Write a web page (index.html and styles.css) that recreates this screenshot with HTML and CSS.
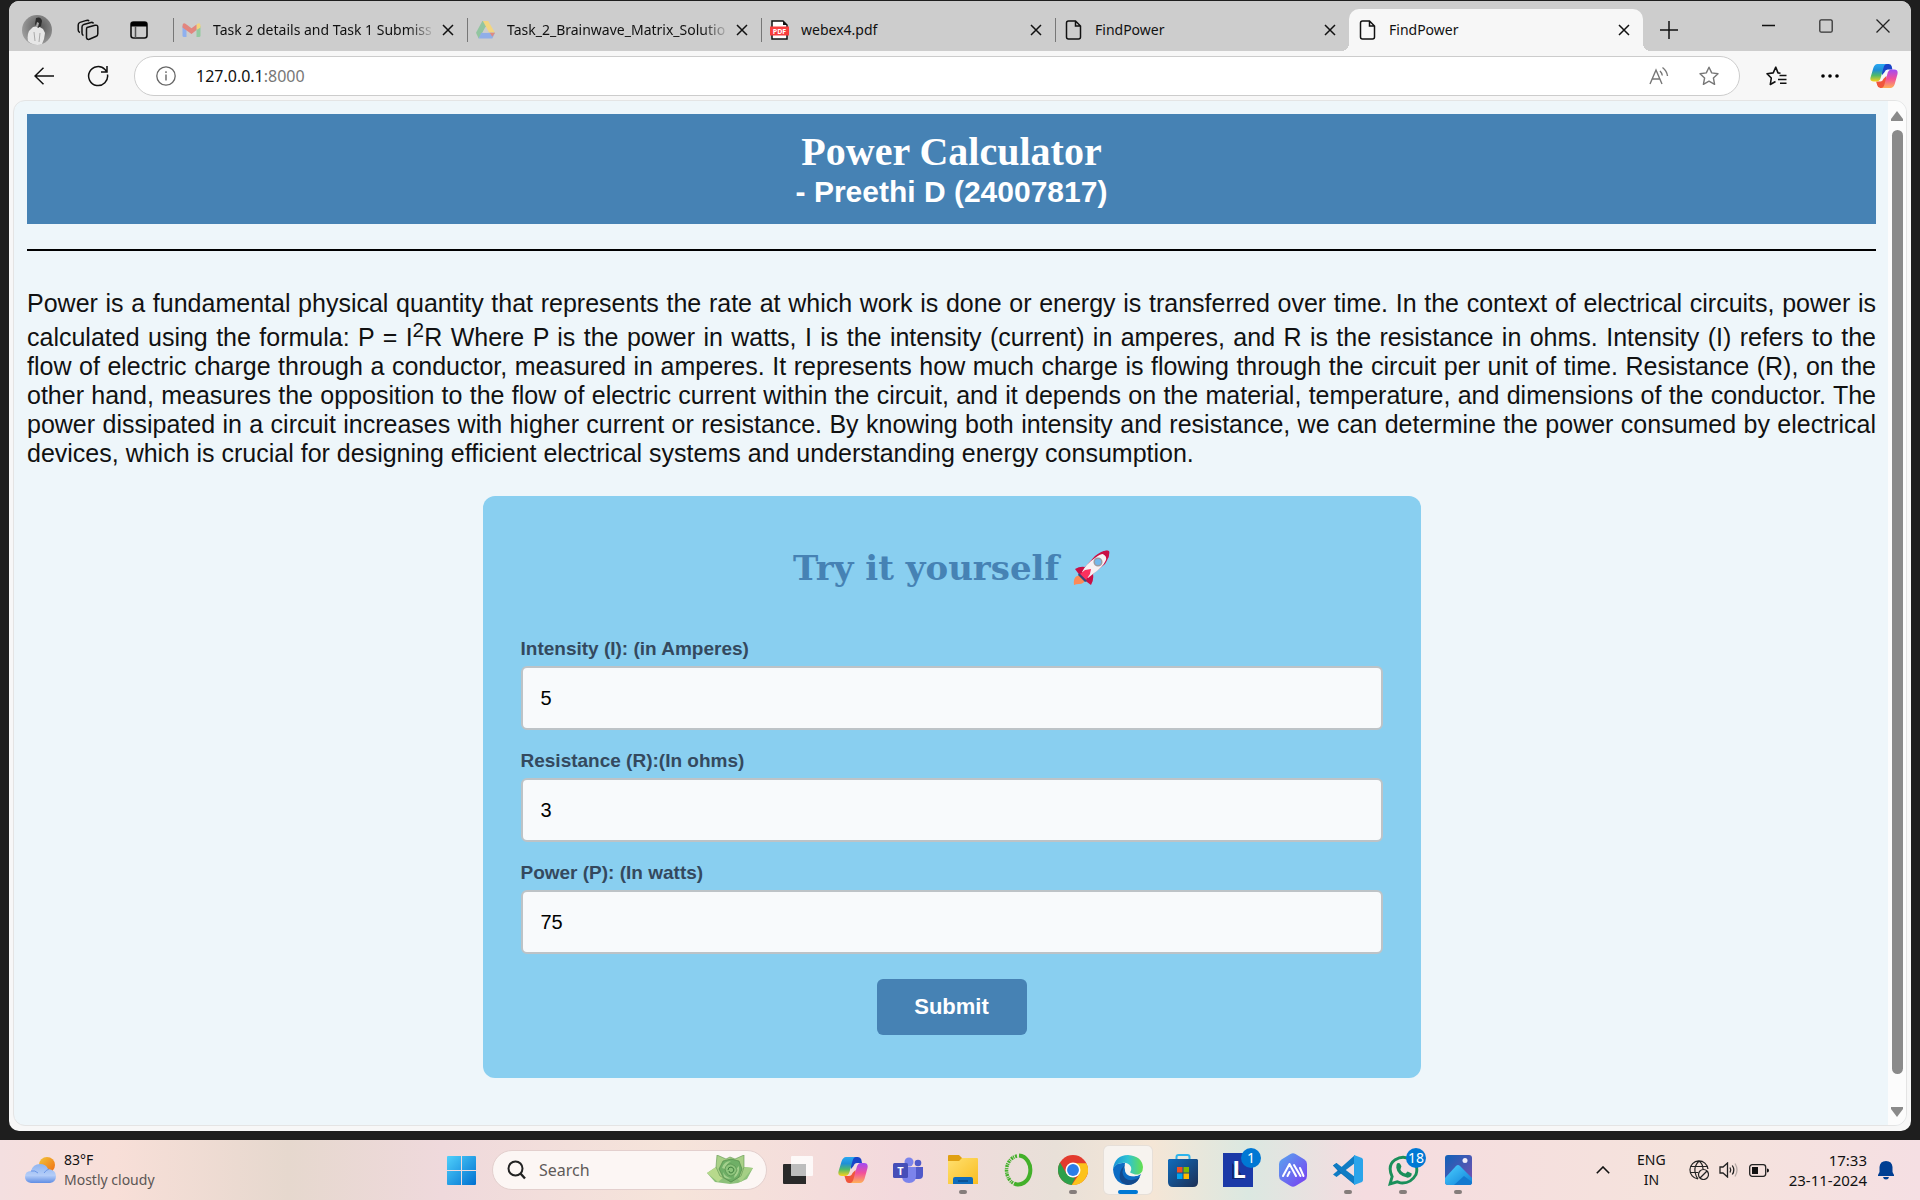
FILE: index.html
```html
<!DOCTYPE html>
<html lang="en">
<head>
<meta charset="utf-8">
<meta name="viewport" content="width=device-width, initial-scale=1">
<title>FindPower</title>
<link rel="stylesheet" href="styles.css">
</head>
<body>
<svg class="defs" aria-hidden="true">
  <defs>
    <linearGradient id="cpA" x1="0" y1="0" x2="0" y2="1"><stop offset="0" stop-color="#2aa8f2"/><stop offset=".35" stop-color="#1f8fd6"/><stop offset=".65" stop-color="#4fb96a"/><stop offset="1" stop-color="#fdd21a"/></linearGradient>
    <linearGradient id="cpB" x1="0" y1="0" x2="0" y2="1"><stop offset="0" stop-color="#a04bf5"/><stop offset=".5" stop-color="#f2509b"/><stop offset="1" stop-color="#ffb057"/></linearGradient>
    <linearGradient id="winG" x1="0" y1="0" x2="1" y2="1"><stop offset="0" stop-color="#4fd0fb"/><stop offset="1" stop-color="#0070d0"/></linearGradient>
    <linearGradient id="sunG" x1="0" y1="0" x2="1" y2="1"><stop offset="0" stop-color="#f2c63a"/><stop offset="1" stop-color="#f06a10"/></linearGradient>
    <linearGradient id="cloudG" x1="0" y1="0" x2="0" y2="1"><stop offset="0" stop-color="#8fb4f0"/><stop offset=".6" stop-color="#b4cdf8"/><stop offset="1" stop-color="#5f8de4"/></linearGradient>
    <linearGradient id="foldG" x1="0" y1="0" x2="1" y2="1"><stop offset="0" stop-color="#ffe070"/><stop offset="1" stop-color="#f9bd20"/></linearGradient>
    <linearGradient id="edgeT" x1="0" y1="0" x2="1" y2="0"><stop offset="0" stop-color="#1793d8"/><stop offset=".5" stop-color="#2fc3d2"/><stop offset="1" stop-color="#66e04c"/></linearGradient>
    <linearGradient id="storeG" x1="0" y1="0" x2="1" y2="1"><stop offset="0" stop-color="#0f6cbd"/><stop offset="1" stop-color="#1c2f55"/></linearGradient>
    <linearGradient id="hexG" x1="0" y1="0" x2="1" y2="1"><stop offset="0" stop-color="#58a6ee"/><stop offset="1" stop-color="#7a3df2"/></linearGradient>
    <linearGradient id="phG" x1="0" y1="0" x2="1" y2="1"><stop offset="0" stop-color="#0f62b8"/><stop offset="1" stop-color="#7c4fb0"/></linearGradient>
    <linearGradient id="phM" x1="0" y1="0" x2="1" y2="1"><stop offset="0" stop-color="#4cd0ff"/><stop offset="1" stop-color="#0f80d8"/></linearGradient>
    <radialGradient id="avG" cx=".6" cy=".4" r=".6"><stop offset="0" stop-color="#555"/><stop offset="1" stop-color="#9a9a9a"/></radialGradient>
    <symbol id="copilot" viewBox="0 0 30 28">
      <path fill="#1a45c8" d="M11 1h9q2.500 0 3.300 2.500L24 7h-5q-2.500 0-3.500 3L13 13z"/>
      <path fill="#f0563c" d="M19 27h-8q-2.500 0-3.300-3L6.500 20H11q2.500 0 3.500-3l3-3z"/>
      <path fill="url(#cpA)" d="M8 1h10q-2.500 0-3.500 4l-3 11q-1.200 4-4.500 4H4q-4.500 0-3.500-4.500l3-10Q5 1 8 1z"/>
      <path fill="url(#cpB)" d="M22 27H12q2.500 0 3.500-4l3-11q1.200-5 4.500-5h3q4.500 0 3.500 5l-3 11Q25 27 22 27z"/>
    </symbol>
    <symbol id="page" viewBox="0 0 16 20"><path d="M3 1h7l5 5v11a2 2 0 0 1-2 2H3a2 2 0 0 1-2-2V3a2 2 0 0 1 2-2zM10 1v5h5" fill="none" stroke="#111" stroke-width="1.500"/></symbol>
    <symbol id="x" viewBox="0 0 12 12"><path d="M1 1l10 10M11 1L1 11" stroke="#111" stroke-width="1.500" fill="none"/></symbol>
  </defs>
</svg>

<div class="desktop">
  <div class="window">
    <header class="tabstrip">
      <div class="tab-tools">
        <button class="tool" aria-label="Profile"><svg width="30" height="30" viewBox="0 0 30 30"><circle cx="15" cy="15" r="15" fill="url(#avG)"/><path d="M6 26q-1-6 1-10l4-4 5-1 5 3 2 4-1 6-2 5q-4 1.500-8 .5-4-1-6-3.500z" fill="#e6e6e6"/><path d="M14 3q5-2 6 3l-1 5-3 2-3-4z" fill="#2c2c2c"/><path d="M15 7l2 1-1 4-2-1z" fill="#aaa"/><path d="M12 17l1 9M18 18l-1 9" stroke="#aaa"/></svg></button>
        <button class="tool" aria-label="Workspaces"><svg width="22" height="22" viewBox="0 0 22 22" fill="none" stroke="#111" stroke-width="1.500" stroke-linejoin="round"><path d="M10 8.500l8-2.200q2.500-.5 2.800 1.500v7q0 2-1.500 2.500l-7 3q-2.300.5-2.800-1.500v-8q0-1.800.5-2.300z"/><path d="M6.500 16.500q-1.500-.5-1.500-2.500V8q0-2 1.800-2.500L14 3.500q2-.5 2.500 1"/><path d="M3 13.500Q1.200 13 1.200 11V6q0-2 1.800-2.600L9.500 1.400q2-.5 2.500.8"/></svg></button>
        <button class="tool" aria-label="Tab actions"><svg width="18" height="18" viewBox="0 0 18 18"><rect x="1" y="1" width="16" height="16" rx="2.500" fill="none" stroke="#111" stroke-width="1.600"/><path d="M1 5.500V3q0-2 2-2h12q2 0 2 2v2.500z" fill="#000"/><path d="M5.500 5v12" stroke="#555" stroke-width="1.500"/></svg></button>
      </div>
      <nav class="tabs" aria-label="Tabs">
        <div class="tab">
          <svg class="fav" width="18" height="14" viewBox="0 0 18 14"><path fill="#8fb0ee" d="M0 3l4 3v8H1.500Q0 14 0 12.500z"/><path fill="#93c9a0" d="M18 3l-4 3v8h2.500q1.500 0 1.500-1.500z"/><path fill="#f3d47c" d="M14 1.500q4-3 4 1.500v1.500L14 7z"/><path fill="#e2857e" d="M0 3q0-4.500 4-1.500l5 3.800 5-3.800V7L9 11 0 4.500z"/></svg>
          <span class="title long">Task 2 details and Task 1 Submiss</span>
          <button class="close" aria-label="Close tab"><svg width="12" height="12"><use href="#x"/></svg></button>
        </div>
        <div class="tab">
          <svg class="fav" width="18" height="18" viewBox="0 0 18 17"><path fill="#92c5a0" d="M6 0h3l1.500 4L4 14.500 2.500 16.500 0 11z"/><path fill="#f3d680" d="M6.500 0h5L18 11h-5.500z"/><path fill="#90aee8" d="M5 11h13l-2.500 5.500h-13z"/><path fill="#cdcdcd" d="M9 5.500l3 5.500H6z"/><path fill="#e08a80" d="M13 11h5l-2.500 4z"/></svg>
          <span class="title long">Task_2_Brainwave_Matrix_Solutio</span>
          <button class="close" aria-label="Close tab"><svg width="12" height="12"><use href="#x"/></svg></button>
        </div>
        <div class="tab">
          <svg class="fav" width="19" height="20" viewBox="0 0 19 20"><path d="M2 1h11l4 4v14H2z" fill="#fff" stroke="#111" stroke-width="1.500"/><path d="M13 1v4h4z" fill="#111"/><rect y="6.500" width="19" height="9" fill="#f83d3d"/><text x="9.500" y="14" font-size="7" font-weight="700" font-family="Open Sans, sans-serif" text-anchor="middle" fill="#fff">PDF</text></svg>
          <span class="title">webex4.pdf</span>
          <button class="close" aria-label="Close tab"><svg width="12" height="12"><use href="#x"/></svg></button>
        </div>
        <div class="tab">
          <svg class="fav" width="16" height="20"><use href="#page"/></svg>
          <span class="title">FindPower</span>
          <button class="close" aria-label="Close tab"><svg width="12" height="12"><use href="#x"/></svg></button>
        </div>
        <div class="tab active">
          <svg class="fav" width="16" height="20"><use href="#page"/></svg>
          <span class="title">FindPower</span>
          <button class="close" aria-label="Close tab"><svg width="12" height="12"><use href="#x"/></svg></button>
        </div>
        <button class="new-tab" aria-label="New tab"><svg width="18" height="18" viewBox="0 0 18 18"><path d="M9 0v18M0 9h18" stroke="#111" stroke-width="1.500"/></svg></button>
      </nav>
      <div class="win-controls">
        <button aria-label="Minimize"><svg width="14" height="14" viewBox="0 0 14 14"><path d="M0 6.500h13" stroke="#111" stroke-width="1.300"/></svg></button>
        <button aria-label="Maximize"><svg width="14" height="14" viewBox="0 0 14 14"><rect x=".8" y=".8" width="12.400" height="12.400" rx="1.500" fill="none" stroke="#333" stroke-width="1.300"/></svg></button>
        <button aria-label="Close window"><svg width="14" height="14" viewBox="0 0 14 14"><path d="M.5.5l13 13M13.500.5l-13 13" stroke="#222" stroke-width="1.300"/></svg></button>
      </div>
    </header>

    <div class="toolbar">
      <button class="nav-btn" aria-label="Back"><svg width="20" height="18" viewBox="0 0 20 18" fill="none" stroke="#111" stroke-width="1.500"><path d="M20 9H1M9.500.8L1 9l8.500 8.200"/></svg></button>
      <button class="nav-btn" aria-label="Refresh"><svg width="22" height="22" viewBox="0 0 22 22" fill="none" stroke="#111" stroke-width="1.500"><path d="M20.500 9.500A9.500 9.500 0 1 1 18 4.500L20 7M20 1v6h-6"/></svg></button>
      <div class="address">
        <svg width="20" height="20" viewBox="0 0 20 20"><circle cx="10" cy="10" r="9.200" fill="none" stroke="#666" stroke-width="1.300"/><path d="M10 8.500v6M10 5.300v1.600" stroke="#666" stroke-width="1.400"/></svg>
        <a class="url" href="http://127.0.0.1:8000">127.0.0.1<span class="port">:8000</span></a>
        <button class="addr-btn" aria-label="Read aloud"><svg width="20" height="20" viewBox="0 0 20 20" fill="none" stroke="#777" stroke-width="1.400"><path d="M1 18L7 4l6 14M3.500 13h7M11 5q2 2 2.300 4.500M13.500 1.500q4.500 3.500 5 8.500"/></svg></button>
        <button class="addr-btn" aria-label="Add to favorites"><svg width="20" height="20" viewBox="0 0 20 20"><path d="M10 1.200l2.700 5.700 6.300.8-4.600 4.300 1.200 6.300L10 15.200l-5.600 3.100L5.600 12 1 7.700l6.300-.8z" fill="none" stroke="#777" stroke-width="1.400" stroke-linejoin="round"/></svg></button>
      </div>
      <button class="nav-btn" aria-label="Favorites"><svg width="21" height="20" viewBox="0 0 21 20" fill="none" stroke="#111" stroke-width="1.600" stroke-linejoin="round"><path d="M14.500 7.300l-2.500-.4L9.800 1.200 7.200 6.900 1 7.700 5.300 12l-1 6.500 5.200-3M13.500 9.500h7M12 13.500h8.500M14 17.300h6.500"/></svg></button>
      <button class="nav-btn" aria-label="Settings and more"><svg width="18" height="4" viewBox="0 0 18 4"><circle cx="2" cy="2" r="1.800"/><circle cx="9" cy="2" r="1.800"/><circle cx="16" cy="2" r="1.800"/></svg></button>
      <button class="nav-btn" aria-label="Copilot"><svg width="28" height="26"><use href="#copilot"/></svg></button>
    </div>

    <div class="viewport">
      <main class="page">
        <div class="banner">
          <h1>Power Calculator</h1>
          <h2>- Preethi D (24007817)</h2>
        </div>
        <hr>
        <p class="intro">Power is a fundamental physical quantity that represents the rate at which work is done or energy is transferred over time. In the context of electrical circuits, power is calculated using the formula: P = I<sup>2</sup>R Where P is the power in watts, I is the intensity (current) in amperes, and R is the resistance in ohms. Intensity (I) refers to the flow of electric charge through a conductor, measured in amperes. It represents how much charge is flowing through the circuit per unit of time. Resistance (R), on the other hand, measures the opposition to the flow of electric current within the circuit, and it depends on the material, temperature, and dimensions of the conductor. The power dissipated in a circuit increases with higher current or resistance. By knowing both intensity and resistance, we can determine the power consumed by electrical devices, which is crucial for designing efficient electrical systems and understanding energy consumption.</p>
        <form class="card" onsubmit="return false">
          <h3>Try it yourself <svg role="img" aria-label="rocket" width="37" height="36" viewBox="0 0 37 36"><path fill="#fd8a58" d="M1 35q-1-7 3-9l6-1 2 5q-1 4-6 4-3 0-5 1z"/><path fill="#c90f45" d="M2 19q5-3 10-2l10-11Q30-.5 36 1q1 5-4 13L20 24q1 6-2 11l-8-6-5-6z"/><path fill="#f6f2f4" d="M9 22q4-8 13-14 5-4 8-4 4 2 3 6-3 7-13 14l-5 4z"/><path fill="#c90f45" d="M30 1.500q4-1.500 6-.5.800 2-.8 7L29 3z"/><path fill="#fb305e" d="M7 24l5-4 6-1-1 5-4 6z"/><path fill="#34477c" d="M6 23l8 8-2 1-7-7z"/><circle cx="25" cy="12" r="3.800" fill="#72b9ec" stroke="#9b9ca3" stroke-width="1.500"/></svg></h3>
          <div class="field"><label for="intensity">Intensity (I): (in Amperes)</label><input id="intensity" type="text" value="5"></div>
          <div class="field"><label for="resistance">Resistance (R):(In ohms)</label><input id="resistance" type="text" value="3"></div>
          <div class="field"><label for="power">Power (P): (In watts)</label><input id="power" type="text" value="75"></div>
          <button class="submit" type="submit">Submit</button>
        </form>
      </main>
      <div class="scrollbar" aria-hidden="true">
        <svg width="12" height="10" viewBox="0 0 12 10"><path d="M6 0l6 8v2H0V8z" fill="#8a8a8a"/></svg>
        <div class="thumb"></div>
        <svg width="12" height="10" viewBox="0 0 12 10"><path d="M6 10l6-8V0H0v2z" fill="#8a8a8a"/></svg>
      </div>
    </div>
  </div>

  <footer class="taskbar">
    <div class="weather">
      <svg width="31" height="26" viewBox="0 0 31 26"><circle cx="22" cy="8" r="8" fill="url(#sunG)"/><path d="M6 26q-6-1-6-6 0-6 6-6Q8 7 15 7q6 0 8 5 8 1 8 7 0 6-6 7z" fill="url(#cloudG)"/><path d="M6 14q4-1 7 2M19 16q2-3 5-4" stroke="#6c96e6" fill="none"/></svg>
      <div class="lines"><span>83°F</span><span class="muted">Mostly cloudy</span></div>
    </div>
    <div class="dock">
      <button class="app" aria-label="Start"><svg width="29" height="29" viewBox="0 0 29 29"><path fill="url(#winG)" d="M1 0h13v14H0V1q0-1 1-1zM15 0h13q1 0 1 1v13H15zM0 15h14v14H1q-1 0-1-1zM15 15h14v13q0 1-1 1H15z"/></svg></button>
      <div class="search">
        <svg width="19" height="20" viewBox="0 0 19 20"><circle cx="8.500" cy="8.500" r="7" fill="none" stroke="#222" stroke-width="2"/><path d="M13.500 13.500l4.500 5" stroke="#222" stroke-width="2.400"/></svg>
        <input type="text" placeholder="Search" aria-label="Search">
        <svg width="46" height="30" viewBox="0 0 46 30"><path fill="#8cc07a" d="M23 29L8 27 0 18l9-6 14 8 14-8 9 1-6 11-9 4z"/><path fill="#b7d98c" d="M0 18l9-6 8 10-6 5z"/><path fill="#a5cf85" d="M46 13l-9-1-8 10 5 5z"/><path fill="#a9d087" stroke="#5f9650" stroke-width=".6" d="M10 0l9 4 4-2 5 2 9-4v12l-3 9-10 6-11-6-4-9z"/><path fill="#6faf66" stroke="#4c8544" stroke-width=".6" d="M12 14l4-8 8-2 8 2 3 8-3 8-8 5-8-5z"/><path fill="#a3d08c" d="M15 13q2-7 9-7-5 3-6 8zM32 11q1 8-5 12 1-6 2-9zM16 17q3 6 9 6-5 2-8-1z"/><path fill="#8cc47b" stroke="#4c8544" stroke-width=".6" d="M18 14q1-5 6-5 5 1 6 6-1 5-6 6-5-1-6-7z"/><path d="M21 15q0-3 3-3 3 1 3 3-1 3-3 3-2 0-2-2" fill="none" stroke="#3f7f3e"/></svg>
      </div>
      <button class="app" aria-label="Task view"><svg width="30" height="28" viewBox="0 0 30 28"><path fill="#2a2a2a" d="M1 8h22v20H1q-1 0-1-1V9q0-1 1-1z"/><rect x="8" width="22" height="20" rx="1" fill="#fff" opacity=".8"/><path fill="#b4b4b4" d="M8 8h15v12H8z" opacity=".7"/></svg></button>
      <button class="app" aria-label="Copilot"><svg width="30" height="28"><use href="#copilot"/></svg></button>
      <button class="app" aria-label="Teams"><svg width="31" height="27" viewBox="0 0 31 27"><circle cx="16" cy="5" r="4.500" fill="#7b83eb"/><circle cx="25" cy="6" r="3.300" fill="#5059c9"/><path fill="#5059c9" d="M21 10h9v8q0 4-4 4h-5z"/><path fill="#7b83eb" d="M9 10h14v9q0 7-7 7t-7-7z"/><rect y="6" width="15" height="15" rx="1.500" fill="#464eb8"/><text x="7.500" y="17.500" text-anchor="middle" font-family="Open Sans, sans-serif" font-weight="700" font-size="11" fill="#fff">T</text></svg></button>
      <button class="app running" aria-label="File Explorer"><svg width="30" height="30" viewBox="0 0 30 30"><path fill="#e0a012" d="M1 0h10l3 3v5H0V1q0-1 1-1z"/><path fill="url(#foldG)" d="M0 6h11l3-3h15q1 0 1 1v25H0z"/><path fill="#0f6cbd" d="M5 29v-5q0-2 2-2h16q2 0 2 2v5z"/><path d="M10 26h10" stroke="#0b4a8a" stroke-width="1.500"/></svg></button>
      <button class="app" aria-label="Anaconda"><svg width="30" height="34" viewBox="0 0 30 34" fill="none" stroke="#43b02a"><path d="M16 2.500a12 14.500 0 1 1-5 28" stroke-width="4"/><path d="M14 3A12.500 14.500 0 0 0 10 30" stroke-width="3.500" stroke-dasharray="2 1 1 .6"/></svg></button>
      <button class="app running" aria-label="Chrome"><svg width="30" height="30" viewBox="0 0 48 48"><circle cx="24" cy="24" r="24" fill="#e33b2e"/><path fill="#2da04a" d="M3.200 12L13.600 30 24 36l4 0L22 48A24 24 0 0 1 3.200 12z"/><path fill="#fcc21b" d="M24 13h21.300A24 24 0 0 1 22 48l12.400-18z"/><circle cx="24" cy="24" r="12" fill="#fff"/><circle cx="24" cy="24" r="9.500" fill="#2b7de9"/></svg></button>
      <button class="app running focused" aria-label="Edge"><svg width="30" height="30" viewBox="0 0 30 30"><path fill="#0c6cc4" d="M0 14Q2 7 12 8q-2 8 4 12 6 3 12-1-4 11-13 11Q1 29 0 14z"/><path fill="#134a8e" d="M12 10q-5 7 0 13 6 5 15-1-4 8-12 8Q5 28 7 18q1-5 5-8z"/><path fill="url(#edgeT)" d="M0 14Q2 0 15 0q14 1 15 12 0 8-8 8-5 0-6-2 3-2 2-6-3-5-9-4-6 0-9 6z"/><path fill="#f7f3ef" d="M15 12q-3 1-3 4 1 4 5 5 5 1 9-1-4 0-8-2-3-2-1-5z"/></svg></button>
      <button class="app" aria-label="Microsoft Store"><svg width="30" height="33" viewBox="0 0 30 33"><path d="M8.500 6V3q0-2 2-2h9q2 0 2 2v3" fill="none" stroke="#2db4ec" stroke-width="2"/><path fill="url(#storeG)" d="M1 5h28l1 1v22q0 5-5 5H5q-5 0-5-5V6z"/><path fill="#f25022" d="M9 13h5.500v5.500H9z"/><path fill="#7fba00" d="M15.500 13H21v5.500h-5.500z"/><path fill="#00a4ef" d="M9 19.500h5.500V25H9z"/><path fill="#ffb900" d="M15.500 19.500H21V25h-5.500z"/></svg></button>
      <button class="app" aria-label="L"><svg width="30" height="34" viewBox="0 0 30 34"><path fill="#1b3aa8" d="M0 0h30v34H0z"/><path d="M9 10v16h12l-6-10z" fill="#12246e"/><text x="16" y="25" text-anchor="middle" font-family="Open Sans, sans-serif" font-weight="700" font-size="24" fill="#fff">L</text></svg><span class="badge">1</span></button>
      <button class="app" aria-label="Assistant"><svg width="28" height="34" viewBox="0 0 28 34"><path fill="url(#hexG)" d="M11.500 1q2.500-1.500 5 0l9 5.500Q28 8 28 11v12q0 3-2.500 4.500l-9 5.500q-2.500 1.500-5 0l-9-5.500Q0 26 0 23V11q0-3 2.500-4.500z"/><path d="M4 23l6.500-12L17 23M8.500 23l2-4M15 12l6.500 11M21 15l3.500 8" stroke="#fff" stroke-width="2" fill="none" stroke-linecap="round" stroke-linejoin="round"/></svg></button>
      <button class="app running" aria-label="Visual Studio Code"><svg width="30" height="32" viewBox="0 0 30 30"><path fill="#0f7cc4" d="M22 0l-19 17-3 2.500L3.500 22 22 8z"/><path fill="#0a68ad" d="M22 30L3.500 8 0 10.500 5 16l17 14z"/><path fill="#0f7cc4" d="M3.500 8L22 22v8L0 10.500z"/><path fill="#2ba4ea" d="M21 0l8 3q1 1 1 2v20q0 1-1 2l-8 3z"/></svg></button>
      <button class="app running" aria-label="WhatsApp"><svg width="31" height="33" viewBox="0 0 30 30"><path d="M2 28l2-7Q-1 10 7 4.500 15-.5 23 5q7 6 4 14-5 9-15 8l-3-1z" fill="none" stroke="#1a8f5a" stroke-width="2.800"/><path d="M9 8q2-1 3 1l1 2-1 3q1 3 5 4l2-2 4 2q0 4-4 4Q9 20 8 12q0-3 1-4z" fill="#1a8f5a"/></svg><span class="badge">18</span></button>
      <button class="app running" aria-label="Photos"><svg width="27" height="30" viewBox="0 0 27 30"><rect width="27" height="30" rx="3" fill="url(#phG)"/><path fill="url(#phM)" d="M0 23L11 11q2-2 4 0l12 12v4q0 3-3 3H3q-3 0-3-3z"/><path fill="#1479cf" d="M9 30l10-9 8 6q0 3-3 3z"/><circle cx="20" cy="5.500" r="2.500" fill="#f1edf8"/></svg></button>
    </div>
    <div class="tray">
      <button aria-label="Show hidden icons"><svg width="14" height="8" viewBox="0 0 14 8"><path d="M.8 7.200L7 1l6.200 6.200" fill="none" stroke="#111" stroke-width="1.600"/></svg></button>
      <div class="lines lang"><span>ENG</span><span>IN</span></div>
      <div class="status">
        <svg width="20" height="20" viewBox="0 0 20 20" fill="none" stroke="#222" stroke-width="1.200"><path d="M9 18.900A9 9 0 1 1 18.900 9M1.500 6.500h17M1 12.500h8M10 1Q5 6 6 12q1 5 3 7M10 1q4 3 4 8"/><circle cx="14.500" cy="14.500" r="5"/><path d="M11 18l7-7"/></svg>
        <svg width="20" height="16" viewBox="0 0 20 16" fill="none" stroke="#222" stroke-width="1.300"><path d="M1 5h3l4.500-4v14L4 11H1z"/><path d="M11 5.500q1.500 2.500 0 5M13.300 3.500q3 4.500 0 9"/><path d="M16 1.500q4 6.500 0 13" stroke="#b5aaa6"/></svg>
        <svg width="20" height="13" viewBox="0 0 20 13"><rect x=".7" y=".7" width="16" height="11.600" rx="2.500" fill="none" stroke="#222" stroke-width="1.300"/><path d="M3 3h6v7H3zM18 4.500q2 0 2 2t-2 2z" fill="#111"/></svg>
      </div>
      <div class="lines clock"><time>17:33</time><time>23-11-2024</time></div>
      <button aria-label="Notifications"><svg width="16" height="19" viewBox="0 0 16 19"><path fill="#003e92" d="M8 0q6 0 6.500 6v5l1.500 3v1H0v-1l1.500-3V6Q2 0 8 0zM5 16h6q-.5 2.500-3 2.500T5 16z"/></svg></button>
    </div>
  </footer>
</div>
</body>
</html>
```
FILE: styles.css
```css
* { box-sizing: border-box; }

body {
  margin: 0;
  background: #1e1e1e;
  font-family: "Noto Sans", sans-serif;
  font-size: 14px;
  color: #111;
}

button {
  border: 0;
  padding: 0;
  background: none;
  font: inherit;
  color: inherit;
  display: flex;
  align-items: center;
  justify-content: center;
}

svg { display: block; flex: none; }

.defs { position: absolute; width: 0; height: 0; }

.desktop {
  min-height: 100vh;
  display: flex;
  flex-direction: column;
}

/* Browser window */
.window {
  flex: 1;
  margin: 1px 9px 9px;
  border-radius: 10px;
  background: #f7f7f7;
  overflow: hidden;
  display: flex;
  flex-direction: column;
}

.tabstrip {
  height: 50px;
  background: #cdcdcd;
  display: flex;
}

.tab-tools {
  display: flex;
  align-items: center;
  padding: 8px 9px 0 2px;
}

.tool { width: 51px; height: 42px; }

.tabs {
  flex: 1;
  min-width: 0;
  display: flex;
  align-items: center;
  padding-top: 8px;
}

.tab {
  flex: 0 1 294px;
  min-width: 0;
  height: 42px;
  display: flex;
  align-items: center;
  gap: 12px;
  padding: 0 13px 0 9px;
  background: linear-gradient(#777, #777) left 9px / 1px 24px no-repeat;
}

.fav { width: 19px; }

.title {
  flex: 1;
  min-width: 0;
  overflow: hidden;
  white-space: nowrap;
  line-height: 20px;
}

.title.long {
  margin-right: -6px;
  mask-image: linear-gradient(to right, #000 calc(100% - 28px), transparent);
}

.close { width: 12px; height: 24px; }

.tab.active {
  position: relative;
  background: #f7f7f7;
  border-radius: 10px 10px 0 0;
}

.tab.active::before,
.tab.active::after {
  content: "";
  position: absolute;
  bottom: 0;
  width: 8px;
  height: 8px;
}

.tab.active::before {
  left: -8px;
  background: radial-gradient(circle at 0 0, transparent 8px, #f7f7f7 8px);
}

.tab.active::after {
  right: -8px;
  background: radial-gradient(circle at 100% 0, transparent 8px, #f7f7f7 8px);
}

.new-tab { width: 52px; height: 42px; }

.win-controls { display: flex; }
.win-controls button { width: 57px; height: 50px; }

.toolbar {
  display: flex;
  align-items: center;
  height: 49px;
  padding: 0 0 0 8px;
}

.nav-btn { width: 54px; height: 40px; }

.address {
  flex: 1;
  min-width: 0;
  height: 40px;
  margin: 0 9px;
  padding: 0 20px 0 21px;
  border: 1px solid #ccc;
  border-radius: 20px;
  background: #fff;
  display: flex;
  align-items: center;
  gap: 20px;
}

.url {
  flex: 1;
  font-size: 16px;
  color: #111;
  text-decoration: none;
}

.port { color: #777; }

.addr-btn { width: 20px; height: 32px; margin-left: 10px; }

.viewport {
  flex: 1;
  margin: 0 4px 5px;
  border: 1px solid #e4e4e4;
  border-radius: 12px;
  background: #eef6fa;
  overflow: hidden;
  display: flex;
}

.scrollbar {
  width: 18px;
  padding: 10px 0 8px;
  background: #fcfcfc;
  display: flex;
  flex-direction: column;
  align-items: center;
}

.thumb {
  flex: 1;
  width: 11px;
  margin: 9px 0 33px;
  border-radius: 6px;
  background: #8a8a8a;
}

/* Calculator page */
.page {
  flex: 1;
  min-width: 0;
  padding: 13px 12px 40px 13px;
  font-family: "Liberation Sans", Arial, sans-serif;
}

.banner {
  padding: 16px 16px 14px;
  background: #4682b4;
  color: #fff;
  text-align: center;
}

.banner h1 {
  margin: 0;
  font: 700 40px/44px "Liberation Serif", "Times New Roman", serif;
}

.banner h2 {
  margin: 0;
  font-size: 30px;
  line-height: 36px;
}

.page hr {
  height: 2px;
  margin: 25px 0 38px;
  border: 0;
  background: #000;
}

.intro {
  margin: 0 0 28px;
  font-size: 25px;
  line-height: 29px;
  text-align: justify;
}

.intro sup { line-height: 24px; }

.card {
  max-width: 938px;
  margin: 0 auto;
  padding: 38px 38px 43px;
  border-radius: 12px;
  background: #89cff0;
  display: flex;
  flex-direction: column;
  gap: 20px;
}

.card h3 {
  display: flex;
  justify-content: center;
  align-items: center;
  gap: 14px;
  margin: 12px 0 28px;
  color: #4682b4;
  font: 700 34px/44px "DejaVu Serif", Georgia, serif;
}

.field {
  display: flex;
  flex-direction: column;
  gap: 6px;
}

.field label {
  color: #34495e;
  font-size: 19px;
  font-weight: 700;
  line-height: 22px;
}

.field input {
  width: 100%;
  height: 64px;
  padding: 0 18px;
  border: 2px solid #bdc3c7;
  border-radius: 6px;
  background: #f8fafc;
  color: #000;
  font: 20px "Liberation Sans", Arial, sans-serif;
}

.submit {
  align-self: center;
  width: 150px;
  height: 56px;
  margin-top: 5px;
  border-radius: 6px;
  background: #4682b4;
  color: #fff;
  font-size: 22px;
  font-weight: 700;
}

/* Taskbar */
.taskbar {
  height: 60px;
  padding: 0 26px 0 25px;
  display: grid;
  grid-template-columns: 1fr auto 1fr;
  align-items: center;
  background: linear-gradient(to right, #f4dfe0 0%, #f8dfd8 6%, #e6d8ce 15%, #efd9dc 23%, #f6e4da 35%, #f3d9dd 47%, #e8e0d8 55%, #f5e6d6 60%, #dbe8e1 65%, #f5dce0 71%, #f5e3dc 88%, #f5dfe3 100%);
}

.weather { display: flex; align-items: center; gap: 8px; }

.lines {
  display: flex;
  flex-direction: column;
  line-height: 20px;
}

.muted { color: #5c5654; }

.dock { display: flex; align-items: center; gap: 7px; }

.app {
  position: relative;
  width: 48px;
  height: 48px;
  border-radius: 5px;
}

.running::after {
  content: "";
  position: absolute;
  bottom: 0;
  left: 20px;
  width: 8px;
  height: 4px;
  border-radius: 2px;
  background: #857d7b;
}

.focused {
  background: #f7f3ef;
  box-shadow: 0 0 0 1px #e6dfd8;
}

.focused::after {
  left: 14px;
  width: 20px;
  background: #0078d4;
}

.badge {
  position: absolute;
  top: 2px;
  right: 1px;
  min-width: 20px;
  height: 20px;
  border-radius: 12px;
  background: #0078d4;
  color: #fff;
  font-size: 14px;
  line-height: 20px;
  text-align: center;
}

.search {
  width: 275px;
  height: 40px;
  padding: 0 13px 0 14px;
  border: 1px solid #e3cfcd;
  border-radius: 20px;
  background: #fcf6f4;
  display: flex;
  align-items: center;
  gap: 13px;
}

.search input {
  flex: 1;
  min-width: 0;
  border: 0;
  padding: 0;
  background: none;
  font: 16px "Noto Sans", sans-serif;
}

.search input::placeholder { color: #5f5a59; opacity: 1; }

.tray {
  display: flex;
  justify-content: flex-end;
  align-items: center;
}

.lang { align-items: center; margin: 0 23px 0 27px; }

.status { display: flex; align-items: center; gap: 10px; }

.clock {
  align-items: flex-end;
  margin: 0 11px 0 20px;
  font-size: 15px;
}
```
